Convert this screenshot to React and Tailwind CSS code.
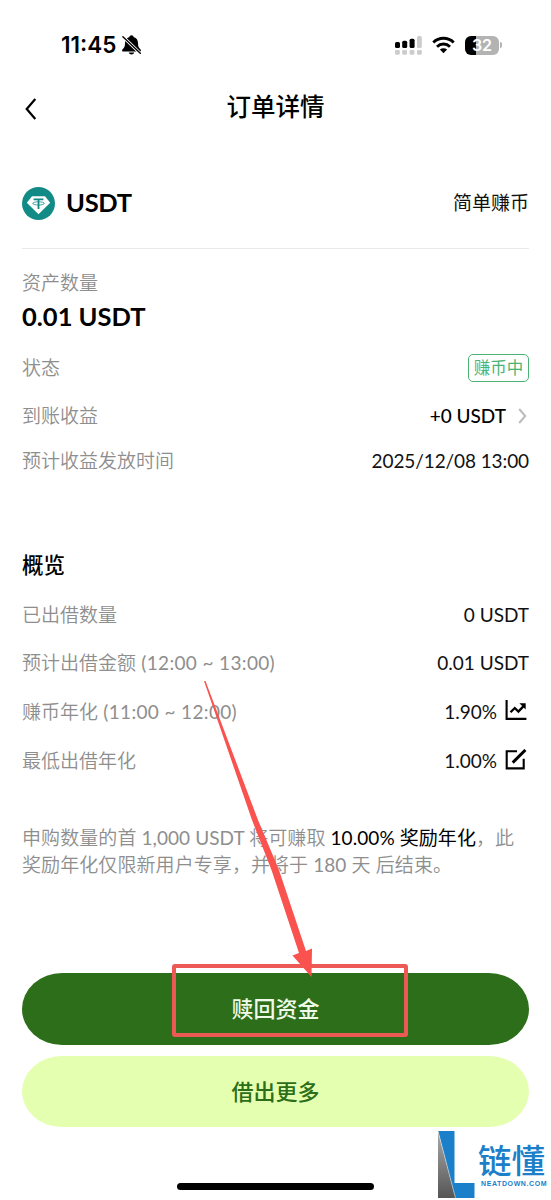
import React from "react";

const BellOff = () => (
  <svg className="ml-1.5 h-5 w-[19px]" viewBox="0 0 19 20" fill="none">
    <path
      d="M9.500 .3c-1.200 0-2 .7-2.100 1.700C4.300 3 3 5.200 3 8.300c0 3.500-.8 4.600-2.600 6.300-.6.700-.3 1.900.6 1.900h17c.9 0 1.200-1.200.6-1.900C16.800 12.900 16 11.800 16 8.300c0-3.100-1.300-5.300-4.400-6.300C11.500 1 10.700.3 9.500.3z"
      fill="#000"
    />
    <path d="M6.700 17.500h5.600c-.4 1.200-1.400 1.900-2.800 1.900s-2.400-.7-2.800-1.900z" fill="#000" />
    <path d="M.9 1.700l17.400 16.600" stroke="#fff" strokeWidth="3" />
    <path d="M.9 1.700l17.400 16.600" stroke="#000" strokeWidth="1.400" strokeLinecap="round" />
  </svg>
);

const Signal = () => (
  <svg className="h-[19px] w-[27px]" viewBox="0 0 27 19">
    <rect x="0" y="6" width="5" height="6" rx="1.600" />
    <rect x="7.200" y="4.700" width="5" height="7.300" rx="1.600" />
    <rect x="14.600" y="2.700" width="5" height="9.300" rx="1.600" />
    <rect x="22" y="0" width="4.800" height="12" rx="1.600" fill="#ccc" />
    {[0, 7.2, 14.6, 22].map((x) => (
      <rect key={x} x={x} y="14" width="4.800" height="4.700" rx="1.300" fill="#ccc" />
    ))}
  </svg>
);

const Wifi = () => (
  <svg className="ml-[10px] h-[18px] w-[23px]" viewBox="0 0 23 18" fill="none" stroke="#000">
    <path d="M1.300 6.500a14.600 14.600 0 0 1 20.400 0" strokeWidth="3" />
    <path d="M5 10.700a9.300 9.300 0 0 1 13 0" strokeWidth="2.900" />
    <path d="M11.500 17.300l-3.600-3.700a5.300 5.300 0 0 1 7.200 0z" fill="#000" stroke="none" />
  </svg>
);

const Battery = () => (
  <div className="ml-[10px] flex items-center">
    <div className="flex h-[19px] w-[34px] items-center justify-center rounded-[6px] bg-[linear-gradient(90deg,#000_32%,#b3b3b3_32%)] font-['Inter'] text-[16px] font-semibold leading-none text-white">
      32
    </div>
    <div className="ml-px h-[6px] w-[2px] rounded-r-full bg-[#b3b3b3]" />
  </div>
);

const TetherIcon = () => (
  <svg className="h-[33px] w-[33px]" viewBox="0 0 33 33" fill="none">
    <circle cx="16.500" cy="16.500" r="16.500" fill="#128b86" />
    <path d="M10 9.200h13l5.200 6.500-11.700 11.600L4.800 15.700z" fill="#fff" />
    <path d="M11.600 12.300h9.800M16.500 12v10" stroke="#128b86" strokeWidth="1.800" />
    <ellipse cx="16.500" cy="16.400" rx="5.800" ry="1.600" stroke="#128b86" strokeWidth=".8" />
  </svg>
);

const TrendIcon = () => (
  <svg className="mb-[3px] ml-2 mr-0.5 h-[22px] w-[22px]" viewBox="0 0 22 22" fill="none" stroke="#000" strokeWidth="2.100">
    <path d="M1.600 0v18.900h19.800" />
    <path d="M5.500 12.300l4.300-4.300 3.600 3.500 5.400-5.600" strokeWidth="2.300" />
    <path d="M14.400 3.300h6.300v6.300z" fill="#000" stroke="none" />
  </svg>
);

const EditIcon = () => (
  <svg className="mb-[3px] ml-2 mr-0.5 h-[22px] w-[22px]" viewBox="0 0 22 22" fill="none" stroke="#000" strokeWidth="2.100">
    <path d="M12 2.200H1.700v17.200h17V9.800" />
    <path d="M7.700 13.600L20.400 .9" strokeWidth="2.900" />
  </svg>
);

const Row = ({ label, range, className, children }) => (
  <div className={`flex items-center justify-between ${className}`}>
    <span className="text-[#8e8e8e]">
      <span className="font-[350]">{label}</span>
      {range && <span className="tracking-[0.35px]"> {range}</span>}
    </span>
    <div className="flex items-center">{children}</div>
  </div>
);

const Watermark = () => (
  <div className="absolute left-[438px] top-[1131px] flex">
    <svg className="h-[68px] w-[37px]" viewBox="0 0 37 68">
      <defs>
        <linearGradient id="steel" x1="0" y1="0" x2="0" y2="1">
          <stop offset="0" stopColor="#aaa" />
          <stop offset="1" stopColor="#555" />
        </linearGradient>
      </defs>
      <path d="M0 0h16.500v52h20v15H17z" fill="#1b80c9" />
      <path d="M0 0l17.500 67H0z" fill="url(#steel)" />
      <path d="M0 0l17.500 67" stroke="#fff" strokeWidth=".5" />
    </svg>
    <div className="ml-[3px] pt-[9px] text-[#1b80c9]">
      <div className="h-[41px] whitespace-nowrap text-[33.500px] font-medium leading-[41px]">链懂</div>
      <div className="ml-[3px] whitespace-nowrap font-['Liberation_Sans'] text-[7px] font-bold leading-[6px] tracking-[0.6px]">
        NEATDOWN.COM
      </div>
    </div>
  </div>
);

const App = () => (
  <div className="relative h-[1200px] w-[551px] overflow-hidden bg-white px-[22px] font-['Lato','Noto_Sans_CJK_SC',sans-serif] text-[19px] text-[#111]">
    <div className="flex h-[90px] items-center justify-between pl-[39px] pr-[27px] text-black">
      <div className="flex items-center font-['Inter'] text-[22.500px] font-semibold">
        11:45
        <BellOff />
      </div>
      <div className="flex items-center">
        <Signal />
        <Wifi />
        <Battery />
      </div>
    </div>

    <div className="grid h-[34px] grid-cols-3 items-center">
      <svg className="ml-[3px] mt-[3px] h-[22px] w-3" viewBox="0 0 12 22" fill="none" stroke="#000" strokeWidth="2.200">
        <path d="M10.300 1L1.700 11l8.600 10" />
      </svg>
      <h1 className="text-center text-[24.500px] font-medium leading-[34px] text-black">订单详情</h1>
    </div>

    <div className="mt-12 flex h-[62px] items-center justify-between">
      <div className="flex items-center">
        <TetherIcon />
        <span className="ml-[11px] pb-px text-[25.500px] font-bold tracking-[-0.3px] text-black">USDT</span>
      </div>
      <span className="pt-px">简单赚币</span>
    </div>
    <div className="mt-[14px] h-px bg-[#e9e9e9]" />

    <div className="mt-5 h-7 font-[350] leading-7 text-[#8e8e8e]">资产数量</div>
    <div className="h-10 text-[25.500px] font-bold leading-[38px] text-black">0.01 USDT</div>

    <Row label="状态" className="mt-2 h-[46px]">
      <span className="flex h-[28px] w-[61px] items-center justify-center rounded-[5px] border-[1.500px] border-[#4bb474] text-[16.500px] text-[#4bb474]">
        赚币中
      </span>
    </Row>
    <Row label="到账收益" className="mt-0.5 h-[46px]">
      <span className="font-medium text-black">+0 USDT</span>
      <svg className="ml-3 mr-0.5 h-4 w-[9px]" viewBox="0 0 9 16" fill="none" stroke="#bbb" strokeWidth="2">
        <path d="M1.200 1l6 7-6 7" />
      </svg>
    </Row>
    <Row label="预计收益发放时间" className="h-11">
      <span className="tracking-[-0.1px]">2025/12/08 13:00</span>
    </Row>

    <h2 className="mt-[62px] h-10 text-[21.500px] font-medium leading-10 text-black">概览</h2>
    <Row label="已出借数量" className="mt-1.5 h-12">
      <span>0 USDT</span>
    </Row>
    <Row label="预计出借金额" range="(12:00 ~ 13:00)" className="h-12">
      <span>0.01 USDT</span>
    </Row>
    <Row label="赚币年化" range="(11:00 ~ 12:00)" className="mt-px h-[49px]">
      <span>1.90%</span>
      <TrendIcon />
    </Row>
    <Row label="最低出借年化" className="h-[49px]">
      <span>1.00%</span>
      <EditIcon />
    </Row>

    <p className="mt-[39px] h-[53px] whitespace-nowrap text-[19px] leading-[26.500px] tracking-[0.08px] text-[#8e8e8e]">
      <span className="font-[350]">申购数量的首</span> 1,000 USDT <span className="font-[350]">将可赚取</span>{" "}
      <span className="text-black">10.00% 奖励年化</span>
      <span className="font-[350]">，此</span>
      <br />
      <span className="font-[350]">奖励年化仅限新用户专享，并将于</span> 180 <span className="font-[350]">天 后结束。</span>
    </p>

    <button
      type="button"
      className="mt-[95px] block h-[72px] w-full rounded-[40px/36px] bg-[#2c6e19] pb-0.5 text-[22px] font-medium text-[#effbe8]"
    >
      赎回资金
    </button>
    <button
      type="button"
      className="mt-[11px] block h-[71px] w-full rounded-[40px/36px] bg-[#e5ffb0] text-[22px] font-medium text-[#2c6e19]"
    >
      借出更多
    </button>
    <div className="mx-auto mt-14 h-[7px] w-[197px] rounded-full bg-black" />

    {/* callout pointing at the redeem button */}
    <div className="absolute left-[172px] top-[964px] h-[73px] w-[236px] rounded-[3px] border-4 border-[#ed5a55]" />
    <svg className="absolute left-[200px] top-[678px] h-[300px] w-[116px]" viewBox="200 678 116 300">
      <path d="M204 681h1.500L258 820l21 50 27 81 6-2.500-.5 28.500-19-21.500 6.500-2.500-27.500-83-19.500-50z" fill="#f9524f" />
    </svg>
    <Watermark />
  </div>
);

export default App;
